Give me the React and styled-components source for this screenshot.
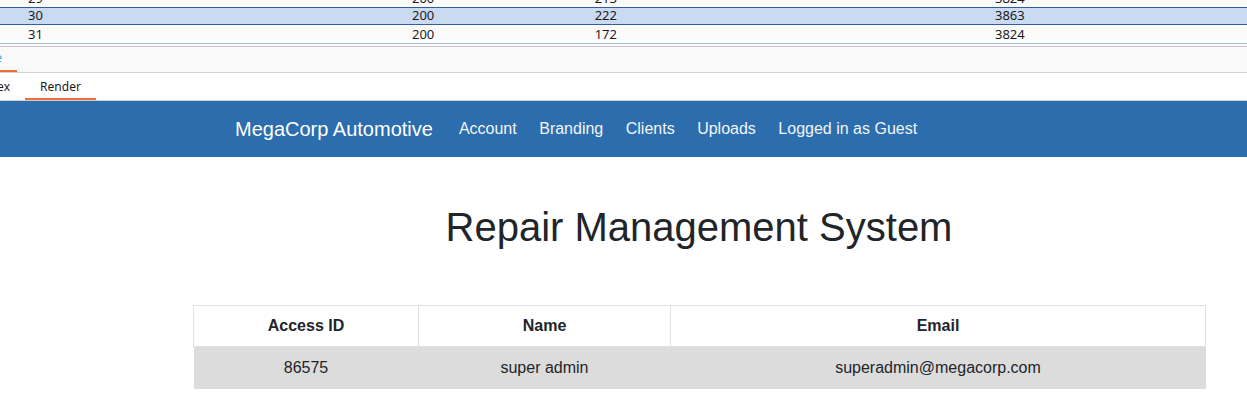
import React from "react";
import styled, { createGlobalStyle } from "styled-components";

const Global = createGlobalStyle`
  html, body { margin: 0; padding: 0; background: #fff; }
  body { font-family: "Liberation Sans", Arial, sans-serif; color: #212529; }
`;

const Page = styled.div`
  width: 1247px;
  height: 413px;
  overflow: hidden;
  display: flex;
  flex-direction: column;
`;

const Requests = styled.div`
  display: flex;
  flex-direction: column;
  background: #fbfbfb;
  font-family: "Noto Sans", "Open Sans", sans-serif;
  font-size: 13px;
  color: #1b1b1b;
  border-bottom: 1px solid #a8bfdd;
`;

const Row = styled.div`
  display: grid;
  grid-template-columns: 384px 150px 55px 1fr;
  grid-template-rows: 17px;
  padding-left: 28px;
  height: ${(p) => p.$h || 17}px;
  flex-shrink: 0;
  align-content: end;
  overflow: hidden;
  box-sizing: border-box;
  background: ${(p) => (p.$selected ? "#c9daf1" : "transparent")};
  border-top: ${(p) => (p.$selected ? "1px solid #2c5f9b" : "none")};
  border-bottom: ${(p) => (p.$selected ? "1px solid #2c5f9b" : "none")};
`;

const Cell = styled.div`
  height: 17px;
  line-height: 17px;
  text-align: ${(p) => (p.$right ? "right" : "left")};
  padding-left: ${(p) => p.$pad || 0}px;
  white-space: nowrap;
`;

const Spacer = styled.div`
  height: 2px;
  background: #fbfbfb;
  border-bottom: 1px solid #c9c1c9;
`;

const TabBar = styled.div`
  display: flex;
  height: 25px;
  background: #f9f9f9;
  border-bottom: 1px solid #d2d2d2;
  font-family: "Noto Sans", sans-serif;
  font-size: 12px;
`;

const ClippedTab = styled.div`
  width: 17px;
  display: flex;
  justify-content: flex-end;
  padding-right: 15px;
  box-sizing: border-box;
  overflow: hidden;
  color: #39a7df;
  border-bottom: 2px solid #f26a36;
  line-height: 22px;
  white-space: nowrap;
`;

const SubTabs = styled.div`
  display: flex;
  height: 27px;
  background: #fff;
  border-bottom: 1px solid #cfcfcf;
  font-family: "Noto Sans", sans-serif;
  font-size: 12px;
  color: #1b1b1b;
`;

const SubTab = styled.div`
  display: flex;
  align-items: center;
  box-sizing: border-box;
  width: ${(p) => p.$w}px;
  margin-left: ${(p) => p.$ml || 0}px;
  border-bottom: 2px solid ${(p) => (p.$active ? "#f26a36" : "transparent")};
  padding-top: 2px;
  white-space: nowrap;
  overflow: hidden;
  justify-content: ${(p) => (p.$end ? "flex-end" : "center")};
`;

const Nav = styled.nav`
  height: 56px;
  background: #2c6dad;
  display: flex;
  align-items: center;
  padding-left: 235px;
`;

const Brand = styled.span`
  font-size: 20px;
  color: #fff;
  margin-right: 26px;
`;

const NavLinks = styled.div`
  display: flex;
  gap: 22.5px;
`;

const NavLink = styled.span`
  font-size: 16px;
  color: #f2f5fa;
`;

const Main = styled.main`
  padding-left: 193px;
  width: 1012px;
`;

const Title = styled.h1`
  margin: 46px 0 54px;
  font-size: 40px;
  font-weight: 400;
  line-height: 48px;
  text-align: center;
  color: #212529;
`;

const Table = styled.table`
  width: 1012px;
  border-collapse: collapse;
  table-layout: fixed;
  font-size: 16px;
`;

const Th = styled.th`
  height: 40px;
  padding: 0;
  border: 1px solid #dee2e6;
  font-weight: 700;
  text-align: center;
  color: #212529;
  background: #fff;
`;

const Td = styled.td`
  height: 41px;
  padding: 0 0 1px;
  border: none;
  text-align: center;
  background: #dcdcdc;
  color: #212529;
`;

const rows = [
  { n: "29", s: "200", size: "213", t: "3824", h: 7 },
  { n: "30", s: "200", size: "222", t: "3863", selected: true, h: 18 },
  { n: "31", s: "200", size: "172", t: "3824", h: 18 },
];

export default function App() {
  return (
    <Page>
      <Global />
      <Requests>
        {rows.map((r) => (
          <Row key={r.n} $selected={r.selected} $h={r.h}>
            <Cell>{r.n}</Cell>
            <Cell>{r.s}</Cell>
            <Cell $right>{r.size}</Cell>
            <Cell $pad={378}>{r.t}</Cell>
          </Row>
        ))}
      </Requests>
      <Spacer />
      <TabBar>
        <ClippedTab>Timeline</ClippedTab>
      </TabBar>
      <SubTabs>
        <SubTab $w={10} $end>Hex</SubTab>
        <SubTab $w={71} $ml={15} $active>Render</SubTab>
      </SubTabs>
      <Nav>
        <Brand>MegaCorp Automotive</Brand>
        <NavLinks>
          <NavLink>Account</NavLink>
          <NavLink>Branding</NavLink>
          <NavLink>Clients</NavLink>
          <NavLink>Uploads</NavLink>
          <NavLink>Logged in as Guest</NavLink>
        </NavLinks>
      </Nav>
      <Main>
        <Title>Repair Management System</Title>
        <Table>
          <colgroup>
            <col style={{ width: 225 }} />
            <col style={{ width: 252 }} />
            <col style={{ width: 535 }} />
          </colgroup>
          <thead>
            <tr>
              <Th>Access ID</Th>
              <Th>Name</Th>
              <Th>Email</Th>
            </tr>
          </thead>
          <tbody>
            <tr>
              <Td>86575</Td>
              <Td>super admin</Td>
              <Td>superadmin@megacorp.com</Td>
            </tr>
          </tbody>
        </Table>
      </Main>
    </Page>
  );
}
